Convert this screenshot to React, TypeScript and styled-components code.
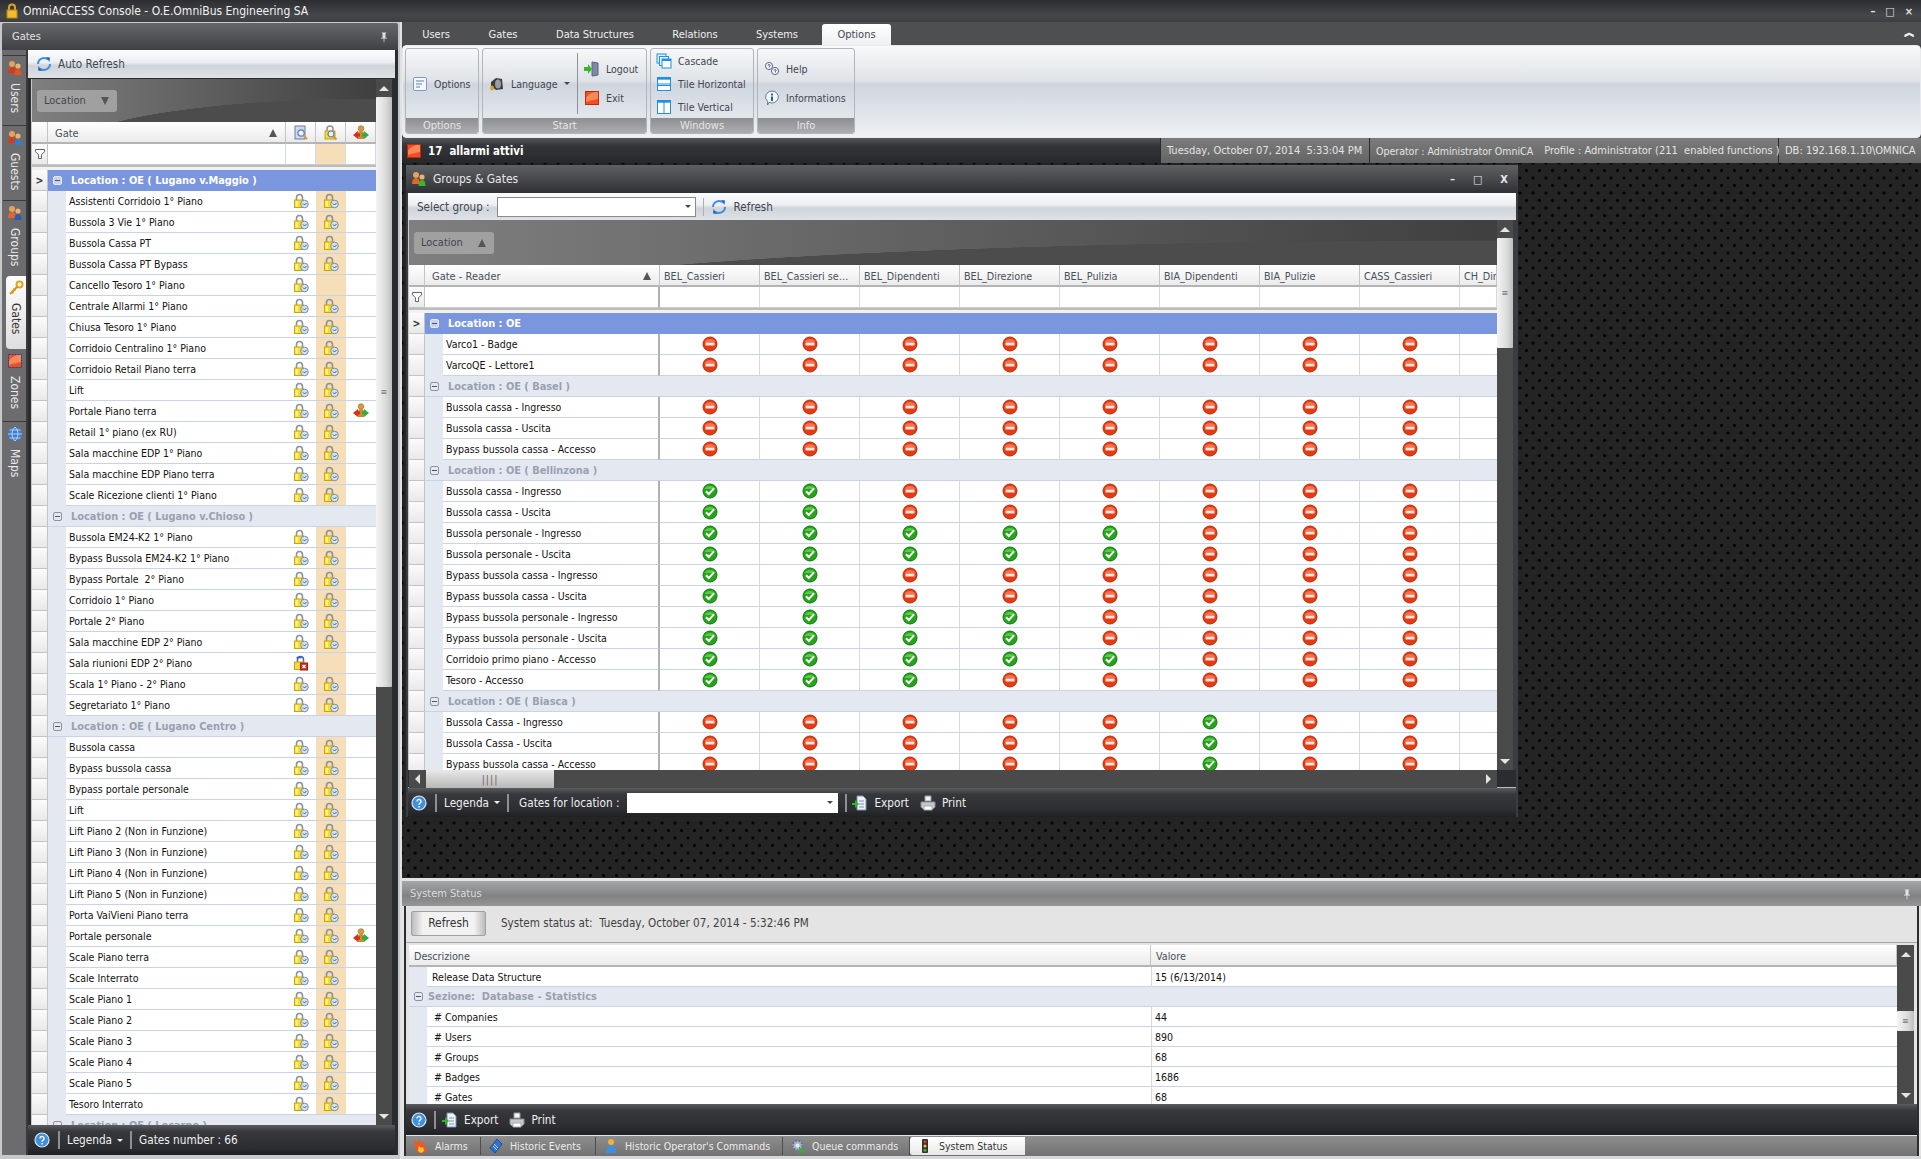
import React from 'react'
import styled, { createGlobalStyle } from 'styled-components'

const GlobalStyle = createGlobalStyle`
  html, body { margin: 0; padding: 0; background: #1c1c1c; }
  body {
    font-family: "DejaVu Sans", Tahoma, "Liberation Sans", sans-serif;
    font-stretch: condensed;
    font-size: 10.5px;
  }
  * { box-sizing: border-box; }
`

/* ---------- icons ---------- */

const IconSvg = styled.svg`
  flex: none;
  display: block;
`

const Svg = ({ size = 16, children }: { size?: number; children: React.ReactNode }) => (
  <IconSvg width={size} height={size} viewBox="0 0 16 16">
    {children}
  </IconSvg>
)

const LockClock = () => (
  <Svg>
    <path d="M3.5 8V4.5a3 3 0 0 1 6 0V8" fill="none" stroke="#8d9196" strokeWidth="1.6" />
    <rect x="1.5" y="7" width="9" height="7.5" fill="#f8dc28" stroke="#c9a510" strokeWidth="1" />
    <rect x="2.5" y="8" width="2.5" height="5.5" fill="#fff08a" />
    <circle cx="11.5" cy="11" r="3.8" fill="#cfe3f2" stroke="#7c8ea0" />
    <path d="M10 10.5l1.5 1.5 2-2" fill="none" stroke="#44607c" strokeWidth="1" />
  </Svg>
)

const LockDenied = () => (
  <Svg>
    <path d="M4.5 8V4.5a3 3 0 0 1 6 0V8" fill="none" stroke="#3f66b4" strokeWidth="1.5" />
    <rect x="3.5" y="1.8" width="5" height="1.6" fill="#3f66b4" />
    <rect x="1.5" y="7" width="9" height="7.5" fill="#f5dc3c" stroke="#c9a510" />
    <rect x="7.5" y="8" width="7" height="7" fill="#d6301c" stroke="#a01c0c" />
    <path d="M9.5 10l3 3m0-3l-3 3" stroke="#fff" strokeWidth="1.5" />
  </Svg>
)

const NoEntry = () => (
  <Svg>
    <circle cx="8" cy="8" r="7" fill="#e83a12" stroke="#bb2c08" />
    <path d="M2.5 6a6 5 0 0 1 11 0z" fill="#f7714c" />
    <rect x="3.5" y="6.5" width="9" height="3" fill="#fbe8e0" />
  </Svg>
)

const CheckOk = () => (
  <Svg>
    <circle cx="8" cy="8" r="7" fill="#27a51a" stroke="#0c7a10" />
    <path d="M2.5 6a6 5 0 0 1 11 0z" fill="#5cca47" />
    <path d="M4 8.2l2.8 2.8 5.2-5.6" fill="none" stroke="#fff" strokeWidth="2" />
  </Svg>
)

const RefreshArrows = () => (
  <Svg>
    <path d="M2 8a6 6 0 0 1 10-4.4" fill="none" stroke="#3f8fdc" strokeWidth="2" />
    <path d="M14 8a6 6 0 0 1-10 4.4" fill="none" stroke="#3f8fdc" strokeWidth="2" />
    <path d="M10 1l4 .5-.5 4.5zM6 15l-4-.5.5-4.5z" fill="#1d6cc0" />
  </Svg>
)

const HelpBall = () => (
  <Svg>
    <circle cx="8" cy="8" r="7" fill="#3f8fdc" stroke="#dfe8f2" strokeWidth="1.2" />
    <path d="M6 6.4a2 2 0 1 1 3 1.8c-.7.4-1 .8-1 1.6" fill="none" stroke="#fff" strokeWidth="1.4" />
    <rect x="7.3" y="11" width="1.5" height="1.5" fill="#fff" />
  </Svg>
)

const People = ({ front = '#e0561c', back = '#d63a1a' }: { front?: string; back?: string }) => (
  <Svg>
    <circle cx="5" cy="4" r="3" fill="#e4a25a" />
    <path d="M1 13c0-4 1.5-6 4-6s4 2 4 6z" fill={back} />
    <circle cx="11" cy="6" r="2.6" fill="#f0b268" />
    <path d="M7.5 15c0-4 1-6 3.5-6s3.5 2 3.5 6z" fill={front} />
  </Svg>
)

const Keys = () => (
  <Svg>
    <circle cx="11.5" cy="4.5" r="3" fill="none" stroke="#e0a51a" strokeWidth="2" />
    <path d="M9.5 6.5L2 14m1.5-3l2 2m0-4.5l2 2" stroke="#d9951a" strokeWidth="2" fill="none" />
  </Svg>
)

const RedSquare = ({ dashed }: { dashed?: boolean }) => (
  <Svg>
    <rect x="1.5" y="1.5" width="13" height="13" fill="#ef4f22" stroke={dashed ? '#1c3f9c' : '#bb2c0c'} strokeDasharray={dashed ? '2 1' : undefined} />
    <path d="M2 8c3-5 7-5 8-6h4v7c-3 1-7 1-12 3z" fill="#fa8858" />
  </Svg>
)

const Globe = () => (
  <Svg>
    <circle cx="8" cy="8" r="7" fill="#3f7ed0" />
    <path d="M1 8h14M8 1c-4 4-4 10 0 14M8 1c4 4 4 10 0 14M2.5 4h11M2.5 12h11" stroke="#cfe2f8" strokeWidth=".8" fill="none" />
  </Svg>
)

const Pin = ({ color = '#ddd' }: { color?: string }) => (
  <Svg size={12}>
    <path d="M5 2h6v1h-1v6h2v1H4V9h2V3H5zM7.5 10h1v5h-1z" fill={color} />
  </Svg>
)

const Funnel = () => (
  <Svg size={12}>
    <path d="M2 2h12v3L10 9v5H6V9L2 5z" fill="#fff" stroke="#555" strokeWidth="1.2" />
  </Svg>
)

const DocSearch = () => (
  <Svg>
    <rect x="2" y="1" width="10" height="13" fill="#cfd9ee" stroke="#6a7fa8" />
    <circle cx="8" cy="8" r="3.2" fill="#e8f3fb" stroke="#5e7ea8" strokeWidth="1.2" />
    <path d="M10.5 10.5l3.5 3.5" stroke="#d89a2c" strokeWidth="2" />
  </Svg>
)

const LockSearch = () => (
  <Svg>
    <path d="M4 7V4a3 3 0 0 1 6 0v3" fill="none" stroke="#8d9196" strokeWidth="1.5" />
    <rect x="2" y="6" width="10" height="8" fill="#f5dc3c" stroke="#c9a510" />
    <circle cx="8" cy="9" r="3" fill="#e8f3fb" stroke="#5e7ea8" strokeWidth="1.2" />
    <path d="M10.5 11.5l3 3" stroke="#d89a2c" strokeWidth="2" />
  </Svg>
)

const PersonArrows = () => (
  <Svg>
    <circle cx="8" cy="3.5" r="2.8" fill="#d99a3c" stroke="#9c6a1c" strokeWidth=".6" />
    <path d="M5 14V8c0-1 1-2 3-2s3 1 3 2v6z" fill="#c98a34" />
    <path d="M0 10l5-4v2.5h2v3H5V14z" fill="#d92c1c" />
    <path d="M16 10l-5-4v2.5H9v3h2V14z" fill="#2fae3c" />
  </Svg>
)

const OptionsDoc = () => (
  <Svg>
    <rect x="1.5" y="1.5" width="13" height="13" rx="1.5" fill="#f4f8fe" stroke="#7f9ac8" />
    <path d="M4 5h8M4 8h6M4 11h4" stroke="#5f7fb4" strokeWidth="1.2" />
  </Svg>
)

const Speaker = () => (
  <Svg>
    <path d="M2 6l5-4 6 1 1 10-7 1-5-4z" fill="#3a3c40" />
    <ellipse cx="9" cy="8" rx="3" ry="4.5" fill="#9a9ca2" />
    <ellipse cx="3" cy="12" rx="2" ry="2.5" fill="#d9a42a" />
  </Svg>
)

const DoorIn = () => (
  <Svg>
    <path d="M8 1l6 1v12l-6 1z" fill="#7f8aa8" stroke="#59627e" />
    <path d="M0 6h4V3l4 5-4 5v-3H0z" fill="#3cb52c" />
  </Svg>
)

const Windows = ({ kind }: { kind: 'cascade' | 'horizontal' | 'vertical' }) => (
  <Svg>
    {kind === 'cascade' && (
      <>
        <rect x="1" y="1" width="9" height="9" fill="#dff0ff" stroke="#1f8fe8" />
        <rect x="3.5" y="3.5" width="9" height="9" fill="#eef7ff" stroke="#1f8fe8" />
        <rect x="6" y="6" width="9" height="9" fill="#fff" stroke="#1f8fe8" />
        <rect x="6" y="6" width="9" height="2" fill="#1f8fe8" />
      </>
    )}
    {kind === 'horizontal' && (
      <>
        <rect x="1.5" y="1.5" width="13" height="13" fill="#fff" stroke="#1f8fe8" />
        <rect x="1.5" y="1.5" width="13" height="2.2" fill="#1f8fe8" />
        <path d="M1.5 8h13M1.5 9.5h13" stroke="#1f8fe8" />
      </>
    )}
    {kind === 'vertical' && (
      <>
        <rect x="1.5" y="1.5" width="13" height="13" fill="#fff" stroke="#1f8fe8" />
        <rect x="1.5" y="1.5" width="13" height="2.2" fill="#1f8fe8" />
        <path d="M8 3v11" stroke="#1f8fe8" />
      </>
    )}
  </Svg>
)

const Bubble = ({ mark }: { mark: 'help' | 'info' }) => (
  <Svg>
    {mark === 'help' ? (
      <>
        <circle cx="5" cy="5" r="3.6" fill="#f4f6fa" stroke="#5d6a86" />
        <circle cx="11" cy="10" r="3.6" fill="#f4f6fa" stroke="#5d6a86" />
        <path d="M4 4.5a1 1 0 1 1 1.3 1V6.5M10 9.5a1 1 0 1 1 1.3 1V11.5" stroke="#2b4fa4" fill="none" />
      </>
    ) : (
      <>
        <path d="M8 1a6.5 6 0 1 1-3 11.4L3.5 15l.2-3.6A6.5 6 0 0 1 8 1z" fill="#f4f7fb" stroke="#6a7688" />
        <rect x="7" y="3.5" width="2" height="2" fill="#1f5cc8" />
        <rect x="7" y="6.5" width="2" height="4.5" fill="#1f5cc8" />
      </>
    )}
  </Svg>
)

const ExportDoc = () => (
  <Svg>
    <path d="M5 1h6l3 3v11H5z" fill="#eef3fa" stroke="#7c90b4" />
    <path d="M7 6h5M7 9h5M7 12h5" stroke="#7c90b4" />
    <path d="M0 8h3V5l4 4-4 4v-3H0z" fill="#2fb52a" />
  </Svg>
)

const Printer = () => (
  <Svg>
    <path d="M5 1h6v5H5z" fill="#f4f4f4" stroke="#999" />
    <path d="M1 7h14v5l-2 2H3l-2-2z" fill="#c3c7cd" stroke="#8c9096" />
    <path d="M4 11h8v4H4z" fill="#fff" stroke="#aaa" />
  </Svg>
)

const Flame = () => (
  <Svg>
    <path d="M1 2l4 3 1-4 3 5 1-3 4 10-4 2H5L2 9z" fill="#ef5a1c" />
    <path d="M6 8l2 2 2-1 1 4-3 2-3-2z" fill="#fbc23c" />
  </Svg>
)

const BlueBook = () => (
  <Svg>
    <path d="M9 1l5 5-7 9-5-5z" fill="#2f73cc" stroke="#174e9c" />
    <path d="M6 6l4 4M5 8l4 4" stroke="#bcd8f8" />
  </Svg>
)

const Operator = () => (
  <Svg>
    <circle cx="8" cy="4" r="3" fill="#f0b23c" />
    <path d="M3 15c0-5 2-8 5-8s5 3 5 8z" fill="#3f8fdc" />
  </Svg>
)

const Gear = () => (
  <Svg>
    <circle cx="7.5" cy="7.5" r="5" fill="#aab4c8" stroke="#687690" strokeWidth="2.4" strokeDasharray="2 1.4" />
    <circle cx="7.5" cy="7.5" r="2" fill="#e8ecf2" />
    <path d="M9 9l6 3.5-6 3.5z" fill="#39ad3a" />
  </Svg>
)

const TrafficLight = () => (
  <Svg>
    <rect x="5" y="1" width="6" height="14" rx="1" fill="#333" />
    <circle cx="8" cy="3.8" r="1.5" fill="#e23a1c" />
    <circle cx="8" cy="8" r="1.5" fill="#f0c22c" />
    <circle cx="8" cy="12.2" r="1.5" fill="#3cb52c" />
  </Svg>
)

const SmallLock = () => (
  <Svg>
    <path d="M5 7V4.5a3 3 0 0 1 6 0V7" fill="none" stroke="#d9a42a" strokeWidth="2" />
    <rect x="3" y="7" width="10" height="8" fill="#f0bd2c" stroke="#b88512" />
  </Svg>
)

/* ---------- shell ---------- */

const Shell = styled.div`
  width: 1921px;
  height: 1159px;
  overflow: hidden;
  display: flex;
  flex-direction: column;
  background: #3a3c40;
`

const TitleBar = styled.div`
  height: 22px;
  flex: none;
  display: flex;
  align-items: center;
  gap: 3px;
  padding: 0 8px 0 4px;
  color: #f2f2f2;
  font-size: 12px;
  background: linear-gradient(#2b2d31, #45474b 70%, #3c3e42);
`

const TitleText = styled.div`
  flex: 1;
`

const WinButtons = styled.div<{ $gap: number }>`
  display: flex;
  align-items: center;
  gap: ${(p) => p.$gap}px;
  color: #e6e6e6;
  font-weight: bold;
  font-size: 11px;
`

const Body = styled.div`
  flex: 1;
  display: flex;
  min-height: 0;
`

const LeftDock = styled.div`
  width: 402px;
  flex: none;
  display: flex;
  flex-direction: column;
  padding: 1px 2px 4px 2px;
  background: #c6c8ca;
  border-right: 2px solid #dfe1e3;
`

const DockHeader = styled.div`
  height: 27px;
  flex: none;
  display: flex;
  align-items: center;
  justify-content: space-between;
  padding: 0 8px 0 10px;
  color: #e4e4e4;
  font-size: 11px;
  background: linear-gradient(#646668, #3f4145);
  border-radius: 2px 2px 0 0;
`

const DockBody = styled.div`
  flex: 1;
  display: flex;
  min-height: 0;
  background: #6a6a6a;
`

const VTabs = styled.div`
  width: 26px;
  flex: none;
  background: #6c6c6e;
  padding: 5px 0 0 1px;
  display: flex;
  flex-direction: column;
  border-right: 2px solid #3a3a3a;
`

const VTab = styled.div<{ $h: number; $active?: boolean; $noLine?: boolean }>`
  height: ${(p) => p.$h}px;
  flex: none;
  display: flex;
  flex-direction: column;
  align-items: center;
  gap: 7px;
  padding-top: 4px;
  color: ${(p) => (p.$active ? '#333' : '#eaeaea')};
  background: ${(p) => (p.$active ? 'linear-gradient(#fdfdfd, #dedede)' : 'transparent')};
  border-top: ${(p) => (p.$active || p.$noLine ? 'none' : '1px solid #3a3a3a')};
  border-radius: ${(p) => (p.$active ? '4px 0 0 4px' : '0')};
  margin-left: ${(p) => (p.$active ? '3px' : '0')};
`

const VLabel = styled.span`
  writing-mode: vertical-rl;
  white-space: nowrap;
  font-size: 12px;
  line-height: 14px;
`

const Pane = styled.div`
  flex: 1;
  min-width: 0;
  display: flex;
  flex-direction: column;
  background: #2a2c30;
  padding: 0 3px 0 0;
`

const GlossBar = styled.div<{ $h: number; $gap?: number; $pad?: number }>`
  height: ${(p) => p.$h}px;
  flex: none;
  display: flex;
  align-items: center;
  gap: ${(p) => p.$gap ?? 6}px;
  padding-left: ${(p) => p.$pad ?? 8}px;
  color: #3f4650;
  font-size: 11.6px;
  background: linear-gradient(#fbfcfd, #eceff2 44%, #cfd4da 56%, #dfe3e7);
`

const GridColumn = styled.div`
  flex: 1;
  min-height: 0;
  display: flex;
  flex-direction: column;
`

const GridFrame = styled.div<{ $margin: string }>`
  flex: 1;
  min-height: 0;
  display: flex;
  margin: ${(p) => p.$margin};
  background: #2a2c30;
  border-left: 1px solid #c9c9c9;
`

const GridMain = styled.div`
  flex: 1;
  min-width: 0;
  display: flex;
  flex-direction: column;
  background: #e4e8f1;
`

const GroupPanel = styled.div<{ $h: number }>`
  height: ${(p) => p.$h}px;
  flex: none;
  display: flex;
  align-items: center;
  padding: 0 0 0 5px;
  background: radial-gradient(ellipse 128% 170% at 100% 165%, #4c4c4c 0 70%, transparent 70.4%),
    linear-gradient(90deg, #7f7f7f, #525252 70%, #3f3f3f);
`

const GroupChip = styled.div`
  width: 80px;
  height: 22px;
  display: flex;
  align-items: center;
  justify-content: space-between;
  padding: 0 8px 0 7px;
  color: #3f4650;
  background: #a0a0a0;
  border-radius: 3px;
  font-size: 11px;
`

const Caret = styled.span<{ $up?: boolean }>`
  width: 0;
  height: 0;
  border-left: 4px solid transparent;
  border-right: 4px solid transparent;
  ${(p) => (p.$up ? 'border-bottom: 8px solid #555;' : 'border-top: 8px solid #555;')}
`

const GridRow = styled.div<{ $cols: string; $h?: number }>`
  display: grid;
  grid-template-columns: ${(p) => p.$cols};
  height: ${(p) => p.$h ?? 21}px;
  flex: none;
`

const HeaderCell = styled.div<{ $center?: boolean; $pad?: number }>`
  display: flex;
  align-items: center;
  justify-content: ${(p) => (p.$center ? 'center' : 'flex-start')};
  padding-left: ${(p) => (p.$center ? 0 : p.$pad ?? 4)}px;
  padding-top: 2px;
  overflow: hidden;
  white-space: nowrap;
  color: #47505c;
  font-size: 10.7px;
  background: linear-gradient(#fff, #ebebeb);
  border-right: 1px solid #c4c4c4;
  border-bottom: 2px solid #b4b4b4;
`

const NameHeader = styled(HeaderCell)`
  grid-column: span 2;
  justify-content: space-between;
  padding: 2px 8px 0 7px;
  font-size: 11px;
`

const SpanHeader = styled(HeaderCell)`
  grid-column: span 2;
`

const FilterCell = styled.div<{ $peach?: boolean; $strong?: boolean; $span?: number }>`
  grid-column: span ${(p) => p.$span ?? 1};
  background: ${(p) => (p.$peach ? '#f5deb8' : '#fff')};
  border-right: ${(p) => (p.$strong ? '2px solid #b0b0b0' : '1px solid #d3dbe8')};
  border-bottom: 1px solid #ccc;
`

const Spacer = styled.div`
  height: 5px;
  flex: none;
  background: #f2f2f2;
  border-top: 2px solid #bcbcbc;
`

const Selector = styled.div`
  display: flex;
  align-items: center;
  justify-content: center;
  background: linear-gradient(#fbfbfb, #e9e9e9);
  border-right: 1px solid #c4c4c4;
  border-bottom: 1px solid #c4c4c4;
  color: #333;
`

const IndentCell = styled.div`
  background: #e4e8f1;
`

const NameCell = styled.div<{ $strong?: boolean; $pad?: number }>`
  display: flex;
  align-items: center;
  padding-left: ${(p) => p.$pad ?? 3}px;
  background: #fff;
  color: #111;
  white-space: pre;
  overflow: hidden;
  border-bottom: 1px solid #c9d3e6;
  border-right: ${(p) => (p.$strong ? '2px solid #b0b0b0' : 'none')};
`

const DataCell = styled.div<{ $peach?: boolean; $line?: boolean }>`
  display: flex;
  align-items: center;
  justify-content: center;
  background: ${(p) => (p.$peach ? '#f5deb8' : '#fff')};
  border-bottom: 1px solid #c9d3e6;
  border-right: ${(p) => (p.$line ? '1px solid #d3dbe8' : 'none')};
`

const ValueCell = styled.div`
  display: flex;
  align-items: center;
  padding-left: 3px;
  background: #fff;
  color: #111;
  white-space: nowrap;
  border-left: 1px solid #d3dbe8;
  border-bottom: 1px solid #c9d3e6;
`

const GroupCell = styled.div<{ $active?: boolean }>`
  grid-column: 2 / -1;
  display: flex;
  align-items: center;
  gap: 9px;
  padding-left: 5px;
  font-weight: bold;
  font-size: 10.9px;
  white-space: pre;
  color: ${(p) => (p.$active ? '#fff' : '#98a1b0')};
  background: ${(p) => (p.$active ? '#7a96de' : '#e4e8f1')};
  border-bottom: 1px solid ${(p) => (p.$active ? '#7a96de' : '#c9d3e6')};
`

const SectionCell = styled(GroupCell)`
  grid-column: 1 / -1;
  gap: 5px;
`

const ExpandBox = styled.span<{ $active?: boolean }>`
  width: 9px;
  height: 9px;
  flex: none;
  position: relative;
  border: 1px solid ${(p) => (p.$active ? '#e4e8f1' : '#8a93a4')};
  border-radius: 2px;
  background: ${(p) => (p.$active ? '#c8d2ee' : 'transparent')};
  &::after {
    content: '';
    position: absolute;
    left: 1px;
    right: 1px;
    top: 3px;
    height: 1px;
    background: #555;
  }
`

const RowsArea = styled.div`
  flex: 1;
  min-height: 0;
  overflow: hidden;
`

const ScrollTrack = styled.div<{ $w?: number }>`
  width: ${(p) => p.$w ?? 16}px;
  flex: none;
  display: flex;
  flex-direction: column;
  background: #4a4a4a;
`

const ScrollBtn = styled.div`
  height: 18px;
  flex: none;
  display: flex;
  align-items: center;
  justify-content: center;
`

const Arrow = styled.span<{ $dir: 'up' | 'down' | 'left' | 'right' }>`
  width: 0;
  height: 0;
  ${(p) =>
    p.$dir === 'up'
      ? 'border-left:5px solid transparent;border-right:5px solid transparent;border-bottom:5px solid #e4e4e4;'
      : p.$dir === 'down'
      ? 'border-left:5px solid transparent;border-right:5px solid transparent;border-top:5px solid #e4e4e4;'
      : p.$dir === 'left'
      ? 'border-top:5px solid transparent;border-bottom:5px solid transparent;border-right:5px solid #e4e4e4;'
      : 'border-top:5px solid transparent;border-bottom:5px solid transparent;border-left:5px solid #e4e4e4;'}
`

const ScrollThumb = styled.div<{ $h: number; $mt?: number }>`
  height: ${(p) => p.$h}px;
  margin-top: ${(p) => p.$mt ?? 0}px;
  flex: none;
  display: flex;
  align-items: center;
  justify-content: center;
  background: linear-gradient(90deg, #f4f4f4, #dcdcdc 60%, #bebebe);
  border-radius: 1px;
  color: #777;
  font-size: 9px;
  line-height: 3px;
`

const ScrollFill = styled.div`
  flex: 1;
`

const DarkBar = styled.div<{ $h: number }>`
  height: ${(p) => p.$h}px;
  flex: none;
  display: flex;
  align-items: center;
  color: #f0f0f0;
  font-size: 11.7px;
  white-space: nowrap;
  background: linear-gradient(#5a5c60, #36383c 22%, #2b2d31 75%, #1e2024);
`

const BarSep = styled.span`
  width: 2px;
  height: 18px;
  background: #8e9094;
  flex: none;
`

const BarItem = styled.div<{ $gap?: number; $ml?: number; $mr?: number }>`
  display: flex;
  align-items: center;
  gap: ${(p) => p.$gap ?? 6}px;
  margin-left: ${(p) => p.$ml ?? 0}px;
  margin-right: ${(p) => p.$mr ?? 0}px;
`

const MiniCaret = styled.span`
  width: 0;
  height: 0;
  border-left: 3px solid transparent;
  border-right: 3px solid transparent;
  border-top: 3px solid currentColor;
`

/* ---------- right side ---------- */

const RightArea = styled.div`
  flex: 1;
  min-width: 0;
  display: flex;
  flex-direction: column;
`

const TabRow = styled.div`
  height: 23px;
  flex: none;
  display: flex;
  align-items: flex-end;
  background: #4e4f50;
  padding-left: 1px;
  color: #f0f0f0;
  font-size: 11px;
`

const RibbonTab = styled.div<{ $w: number; $active?: boolean }>`
  width: ${(p) => p.$w}px;
  height: 21px;
  display: flex;
  align-items: center;
  justify-content: center;
  margin-left: ${(p) => (p.$active ? 5 : 0)}px;
  color: ${(p) => (p.$active ? '#3f4650' : '#f0f0f0')};
  background: ${(p) => (p.$active ? 'linear-gradient(#fff, #eef0f2)' : 'transparent')};
  border-radius: 3px 3px 0 0;
`

const CollapseMark = styled.div`
  margin-left: auto;
  margin-right: 6px;
  margin-bottom: 7px;
  color: #f4f4f4;
  font-size: 11px;
  line-height: 10px;
  font-weight: bold;
`

const Ribbon = styled.div`
  height: 93px;
  flex: none;
  display: flex;
  gap: 3px;
  padding: 2px 2px 3px 2px;
  background: linear-gradient(#f8f9fa, #dfe3e7 38%, #cfd5dc 42%, #eef2f6);
  border: 1px solid #e8eaec;
  border-radius: 4px;
`

const RibbonGroup = styled.div<{ $w: number }>`
  width: ${(p) => p.$w}px;
  flex: none;
  display: flex;
  flex-direction: column;
  border: 1px solid #b0b5bb;
  border-radius: 3px;
  overflow: hidden;
`

const GroupContent = styled.div`
  flex: 1;
  display: flex;
  min-height: 0;
`

const GroupCaption = styled.div`
  height: 15px;
  flex: none;
  display: flex;
  align-items: center;
  justify-content: center;
  color: #e6e6e6;
  font-size: 11px;
  background: linear-gradient(#8c8e92, #acaeb0);
`

const RibbonStack = styled.div<{ $evenly?: boolean; $w?: number }>`
  flex: ${(p) => (p.$w ? `0 0 ${p.$w}px` : '1')};
  display: flex;
  flex-direction: column;
  justify-content: center;
  gap: ${(p) => (p.$evenly ? 7 : 13)}px;
  padding-left: ${(p) => (p.$evenly ? 5 : 6)}px;
`

const RibbonItem = styled.div`
  display: flex;
  align-items: center;
  gap: 6px;
  color: #3f4650;
  white-space: nowrap;
`

const RibbonDivider = styled.div`
  width: 1px;
  margin: 4px 0;
  background: #8d9298;
  flex: none;
`

const AlarmRow = styled.div`
  height: 25px;
  flex: none;
  display: flex;
  align-items: stretch;
`

const AlarmStrip = styled.div`
  width: 758px;
  flex: none;
  display: flex;
  align-items: center;
  gap: 6px;
  padding-left: 4px;
  color: #fff;
  font-weight: bold;
  font-size: 11.4px;
  white-space: pre;
  background: linear-gradient(#55575a, #33353a 30%, #26282c);
`

const StatusStrip = styled.div`
  flex: 1;
  display: flex;
  align-items: center;
  color: #e4e4e4;
  white-space: pre;
  font-size: 11px;
  background: linear-gradient(#7c7c7c, #646464);
  border-left: 1px solid #2a2a2a;
`

const StatusCell = styled.div<{ $w: number; $last?: boolean }>`
  width: ${(p) => p.$w}px;
  flex: none;
  height: 100%;
  display: flex;
  align-items: center;
  padding-left: 6px;
  gap: 11px;
  border-right: ${(p) => (p.$last ? 'none' : '1px solid #2a2a2a')};
`

const OperatorName = styled.span`
  font-size: 10.5px;
`

const Workspace = styled.div`
  flex: 1;
  min-height: 0;
  padding: 2px 0 0 4px;
  background-color: #242424;
  background-image: radial-gradient(circle at center, #000 1.2px, transparent 1.7px),
    radial-gradient(circle at center, #000 1.2px, transparent 1.7px);
  background-size: 13px 15px;
  background-position: 0 0, 6.5px 7.5px;
`

const MdiWindow = styled.div`
  width: 1112px;
  height: 652px;
  display: flex;
  flex-direction: column;
  background: #3a3c40;
  padding: 0 2px;
`

const MdiTitle = styled.div`
  height: 28px;
  flex: none;
  display: flex;
  align-items: center;
  gap: 6px;
  padding: 0 10px 0 5px;
  color: #e8e8e8;
  font-size: 12px;
  margin: 0 -2px;
  background: linear-gradient(#5e6064, #2f3135);
`

const MdiTitleText = styled.div`
  flex: 1;
`

const Combo = styled.div<{ $w: number; $dark?: boolean }>`
  width: ${(p) => p.$w}px;
  height: 20px;
  flex: none;
  display: flex;
  align-items: center;
  justify-content: flex-end;
  padding-right: 4px;
  color: #444;
  background: #fff;
  border: 1px solid ${(p) => (p.$dark ? '#fff' : '#8a8a8a')};
`

const ToolSep = styled.span`
  width: 1px;
  height: 18px;
  background: #aab0b6;
  flex: none;
`

const HScroll = styled.div`
  height: 18px;
  flex: none;
  display: flex;
  align-items: center;
  background: #4a4a4a;
  margin-right: 19px;
  margin-left: 1px;
`

const HCorner = styled.div`
  height: 18px;
  flex: none;
  display: flex;
  background: #2a2c30;
  border-bottom: 1px solid #bbb;
`

const HBtn = styled.div`
  width: 17px;
  height: 100%;
  flex: none;
  display: flex;
  align-items: center;
  justify-content: center;
`

const HThumb = styled.div`
  width: 128px;
  height: 100%;
  flex: none;
  display: flex;
  align-items: center;
  justify-content: center;
  color: #666;
  letter-spacing: 1px;
  background: linear-gradient(#e8e8e8, #b8b8b8);
`

const HFill = styled.div`
  flex: 1;
`

const StatusPanel = styled.div`
  height: 281px;
  flex: none;
  display: flex;
  flex-direction: column;
  border-top: 3px solid #e2e4e6;
  background: #e4e4e4;
`

const StatusTitle = styled.div`
  height: 25px;
  flex: none;
  display: flex;
  align-items: center;
  justify-content: space-between;
  padding: 0 8px 0 8px;
  color: #dcdcdc;
  font-size: 11px;
  background: linear-gradient(#a4a6a8, #808284 60%, #949698);
`

const StatusBody = styled.div`
  flex: 1;
  min-height: 0;
  display: flex;
  flex-direction: column;
  margin: 0 2px 0 2px;
  border-left: 2px solid #2b2d31;
  border-right: 2px solid #2b2d31;
  background: #e4e4e4;
`

const StatusTools = styled.div`
  height: 37px;
  flex: none;
  display: flex;
  align-items: center;
  gap: 15px;
  padding: 0 0 2px 5px;
  color: #404040;
  font-size: 11.6px;
  white-space: pre;
  border-bottom: 1px solid #a6a6a6;
`

const PlainButton = styled.div`
  width: 75px;
  height: 25px;
  display: flex;
  align-items: center;
  justify-content: center;
  color: #333;
  border: 1px solid #a0a0a0;
  border-radius: 2px;
  font-size: 12px;
  background: linear-gradient(90deg, #bcbcbc, #f2f2f2 15%, #f2f2f2 85%, #bcbcbc);
`

const StatusGridFrame = styled.div`
  height: 159px;
  flex: none;
  display: flex;
  margin: 2px 3px 0 3px;
`

const BottomTabs = styled.div`
  height: 21px;
  flex: none;
  display: flex;
  align-items: stretch;
  margin-top: 1px;
  color: #ededed;
  white-space: nowrap;
  background: linear-gradient(#8e8e8e, #707070);
`

const BottomTab = styled.div<{ $w: number; $active?: boolean }>`
  width: ${(p) => p.$w}px;
  flex: none;
  display: flex;
  align-items: center;
  gap: 6px;
  padding-left: 7px;
  color: ${(p) => (p.$active ? '#333' : '#ededed')};
  background: ${(p) => (p.$active ? 'linear-gradient(#fff, #e8e8e8)' : 'transparent')};
  border-right: ${(p) => (p.$active ? 'none' : '1px solid #4e4e4e')};
  border-radius: ${(p) => (p.$active ? '3px 0 0 3px' : '0')};
  margin: 1px 0 2px;
`

const BottomEdge = styled.div`
  height: 3px;
  flex: none;
  background: #d6d8da;
`

/* ---------- data ---------- */

type Access = 0 | 1 | 2
type Gate = [string, Access?, Access?, Access?]

const leftGroups: { title: string; active?: boolean; rows: Gate[] }[] = [
  {
    title: 'Location : OE ( Lugano v.Maggio )',
    active: true,
    rows: [
      ['Assistenti Corridoio 1° Piano'],
      ['Bussola 3 Vie 1° Piano'],
      ['Bussola Cassa PT'],
      ['Bussola Cassa PT Bypass'],
      ['Cancello Tesoro 1° Piano', 1, 0],
      ['Centrale Allarmi 1° Piano'],
      ['Chiusa Tesoro 1° Piano'],
      ['Corridoio Centralino 1° Piano'],
      ['Corridoio Retail Piano terra'],
      ['Lift'],
      ['Portale Piano terra', 1, 1, 1],
      ['Retail 1° piano (ex RU)'],
      ['Sala macchine EDP 1° Piano'],
      ['Sala macchine EDP Piano terra'],
      ['Scale Ricezione clienti 1° Piano'],
    ],
  },
  {
    title: 'Location : OE ( Lugano v.Chioso )',
    rows: [
      ['Bussola EM24-K2 1° Piano'],
      ['Bypass Bussola EM24-K2 1° Piano'],
      ['Bypass Portale  2° Piano'],
      ['Corridoio 1° Piano'],
      ['Portale 2° Piano'],
      ['Sala macchine EDP 2° Piano'],
      ['Sala riunioni EDP 2° Piano', 2, 0],
      ['Scala 1° Piano - 2° Piano'],
      ['Segretariato 1° Piano'],
    ],
  },
  {
    title: 'Location : OE ( Lugano Centro )',
    rows: [
      ['Bussola cassa'],
      ['Bypass bussola cassa'],
      ['Bypass portale personale'],
      ['Lift'],
      ['Lift Piano 2 (Non in Funzione)'],
      ['Lift Piano 3 (Non in Funzione)'],
      ['Lift Piano 4 (Non in Funzione)'],
      ['Lift Piano 5 (Non in Funzione)'],
      ['Porta VaiVieni Piano terra'],
      ['Portale personale', 1, 1, 1],
      ['Scale Piano terra'],
      ['Scale Interrato'],
      ['Scale Piano 1'],
      ['Scale Piano 2'],
      ['Scale Piano 3'],
      ['Scale Piano 4'],
      ['Scale Piano 5'],
      ['Tesoro Interrato'],
    ],
  },
  { title: 'Location : OE ( Locarno )', rows: [] },
]

const permissionColumns = ['BEL_Cassieri', 'BEL_Cassieri se…', 'BEL_Dipendenti', 'BEL_Direzione', 'BEL_Pulizia', 'BIA_Dipendenti', 'BIA_Pulizie', 'CASS_Cassieri', 'CH_Dir']

const permissionGroups: { title: string; active?: boolean; rows: [string, string][] }[] = [
  {
    title: 'Location : OE',
    active: true,
    rows: [
      ['Varco1 - Badge', 'RRRRRRRR'],
      ['VarcoQE - Lettore1', 'RRRRRRRR'],
    ],
  },
  {
    title: 'Location : OE ( Basel )',
    rows: [
      ['Bussola cassa - Ingresso', 'RRRRRRRR'],
      ['Bussola cassa - Uscita', 'RRRRRRRR'],
      ['Bypass bussola cassa - Accesso', 'RRRRRRRR'],
    ],
  },
  {
    title: 'Location : OE ( Bellinzona )',
    rows: [
      ['Bussola cassa - Ingresso', 'GGRRRRRR'],
      ['Bussola cassa - Uscita', 'GGRRRRRR'],
      ['Bussola personale - Ingresso', 'GGGGGRRR'],
      ['Bussola personale - Uscita', 'GGGGGRRR'],
      ['Bypass bussola cassa - Ingresso', 'GGRRRRRR'],
      ['Bypass bussola cassa - Uscita', 'GGRRRRRR'],
      ['Bypass bussola personale - Ingresso', 'GGGGRRRR'],
      ['Bypass bussola personale - Uscita', 'GGGGRRRR'],
      ['Corridoio primo piano - Accesso', 'GGGGGRRR'],
      ['Tesoro - Accesso', 'GGGRRRRR'],
    ],
  },
  {
    title: 'Location : OE ( Biasca )',
    rows: [
      ['Bussola Cassa - Ingresso', 'RRRRRGRR'],
      ['Bussola Cassa - Uscita', 'RRRRRGRR'],
      ['Bypass bussola cassa - Accesso', 'RRRRRGRR'],
    ],
  },
]

const statusRows = [
  ['# Companies', '44'],
  ['# Users', '890'],
  ['# Groups', '68'],
  ['# Badges', '1686'],
  ['# Gates', '68'],
]

const LEFT_COLS = '16px 18px 220px 30px 30px 30px'
const PERM_COLS = '16px 18px 217px repeat(8, 100px) 1fr'
const STATUS_COLS = '18px 724px 1fr'

const accessIcon = (value: Access | undefined) => {
  if (value === 0) return null
  return value === 2 ? <LockDenied /> : <LockClock />
}

function LeftGrid() {
  return (
    <GridFrame $margin="1px 3px 0 3px">
      <GridMain>
        <GroupPanel $h={43}>
          <GroupChip>
            Location <Caret />
          </GroupChip>
        </GroupPanel>
        <GridRow $cols={LEFT_COLS} $h={22}>
          <HeaderCell />
          <NameHeader>
            Gate <Caret $up />
          </NameHeader>
          <HeaderCell $center>
            <DocSearch />
          </HeaderCell>
          <HeaderCell $center>
            <LockSearch />
          </HeaderCell>
          <HeaderCell $center>
            <PersonArrows />
          </HeaderCell>
        </GridRow>
        <GridRow $cols={LEFT_COLS}>
          <Selector>
            <Funnel />
          </Selector>
          <FilterCell $span={2} />
          <FilterCell />
          <FilterCell $peach />
          <FilterCell />
        </GridRow>
        <Spacer />
        <RowsArea>
          {leftGroups.map((group) => (
            <React.Fragment key={group.title}>
              <GridRow $cols={LEFT_COLS}>
                <Selector>{group.active ? <b>&gt;</b> : null}</Selector>
                <GroupCell $active={group.active}>
                  <ExpandBox $active={group.active} />
                  {group.title}
                </GroupCell>
              </GridRow>
              {group.rows.map(([name, first = 1, second = 1, third = 0], i) => (
                <GridRow $cols={LEFT_COLS} key={name + i}>
                  <Selector />
                  <IndentCell />
                  <NameCell>{name}</NameCell>
                  <DataCell>{accessIcon(first)}</DataCell>
                  <DataCell $peach>{accessIcon(second)}</DataCell>
                  <DataCell>{third ? <PersonArrows /> : null}</DataCell>
                </GridRow>
              ))}
            </React.Fragment>
          ))}
        </RowsArea>
      </GridMain>
      <ScrollTrack>
        <ScrollBtn>
          <Arrow $dir="up" />
        </ScrollBtn>
        <ScrollThumb $h={590}>≡</ScrollThumb>
        <ScrollFill />
        <ScrollBtn>
          <Arrow $dir="down" />
        </ScrollBtn>
      </ScrollTrack>
    </GridFrame>
  )
}

function PermissionGrid() {
  return (
    <GridColumn>
      <GridFrame $margin="0 3px 0 0">
        <GridMain>
          <GroupPanel $h={45}>
            <GroupChip>
              Location <Caret $up />
            </GroupChip>
          </GroupPanel>
          <GridRow $cols={PERM_COLS} $h={22}>
            <HeaderCell />
            <NameHeader>
              Gate - Reader <Caret $up />
            </NameHeader>
            {permissionColumns.map((c) => (
              <HeaderCell key={c}>{c}</HeaderCell>
            ))}
          </GridRow>
          <GridRow $cols={PERM_COLS}>
            <Selector>
              <Funnel />
            </Selector>
            <FilterCell $strong $span={2} />
            {permissionColumns.map((c) => (
              <FilterCell key={c} />
            ))}
          </GridRow>
          <Spacer />
          <RowsArea>
            {permissionGroups.map((group) => (
              <React.Fragment key={group.title}>
                <GridRow $cols={PERM_COLS}>
                  <Selector>{group.active ? <b>&gt;</b> : null}</Selector>
                  <GroupCell $active={group.active}>
                    <ExpandBox $active={group.active} />
                    {group.title}
                  </GroupCell>
                </GridRow>
                {group.rows.map(([name, flags]) => (
                  <GridRow $cols={PERM_COLS} key={name}>
                    <Selector />
                    <IndentCell />
                    <NameCell $strong>{name}</NameCell>
                    {flags.split('').map((flag, i) => (
                      <DataCell $line key={i}>
                        {flag === 'G' ? <CheckOk /> : <NoEntry />}
                      </DataCell>
                    ))}
                    <DataCell />
                  </GridRow>
                ))}
              </React.Fragment>
            ))}
          </RowsArea>
        </GridMain>
        <ScrollTrack>
          <ScrollBtn>
            <Arrow $dir="up" />
          </ScrollBtn>
          <ScrollThumb $h={110}>≡</ScrollThumb>
          <ScrollFill />
          <ScrollBtn>
            <Arrow $dir="down" />
          </ScrollBtn>
        </ScrollTrack>
      </GridFrame>
      <HCorner>
        <HFill>
          <HScroll>
            <HBtn>
              <Arrow $dir="left" />
            </HBtn>
            <HThumb>||||</HThumb>
            <HFill />
            <HBtn>
              <Arrow $dir="right" />
            </HBtn>
          </HScroll>
        </HFill>
      </HCorner>
    </GridColumn>
  )
}

function StatusGrid() {
  return (
    <StatusGridFrame>
      <GridMain>
        <GridRow $cols={STATUS_COLS} $h={22}>
          <SpanHeader $pad={5}>Descrizione</SpanHeader>
          <HeaderCell $pad={5}>Valore</HeaderCell>
        </GridRow>
        <RowsArea>
          <GridRow $cols={STATUS_COLS} $h={20}>
            <IndentCell />
            <NameCell $pad={5}>Release Data Structure</NameCell>
            <ValueCell>15 (6/13/2014)</ValueCell>
          </GridRow>
          <GridRow $cols={STATUS_COLS} $h={20}>
            <SectionCell>
              <ExpandBox />
              Sezione:  Database - Statistics
            </SectionCell>
          </GridRow>
          {statusRows.map(([name, value]) => (
            <GridRow $cols={STATUS_COLS} $h={20} key={name}>
              <IndentCell />
              <NameCell $pad={7}>{name}</NameCell>
              <ValueCell>{value}</ValueCell>
            </GridRow>
          ))}
        </RowsArea>
      </GridMain>
      <ScrollTrack $w={17}>
        <ScrollBtn>
          <Arrow $dir="up" />
        </ScrollBtn>
        <ScrollThumb $h={20} $mt={48}>
          ≡
        </ScrollThumb>
        <ScrollFill />
        <ScrollBtn>
          <Arrow $dir="down" />
        </ScrollBtn>
      </ScrollTrack>
    </StatusGridFrame>
  )
}

function RibbonBar() {
  return (
    <Ribbon>
      <RibbonGroup $w={74}>
        <GroupContent>
          <RibbonStack>
            <RibbonItem>
              <OptionsDoc />
              Options
            </RibbonItem>
          </RibbonStack>
        </GroupContent>
        <GroupCaption>Options</GroupCaption>
      </RibbonGroup>
      <RibbonGroup $w={165}>
        <GroupContent>
          <RibbonStack $w={94}>
            <RibbonItem>
              <Speaker />
              Language
              <MiniCaret />
            </RibbonItem>
          </RibbonStack>
          <RibbonDivider />
          <RibbonStack>
            <RibbonItem>
              <DoorIn />
              Logout
            </RibbonItem>
            <RibbonItem>
              <RedSquare />
              Exit
            </RibbonItem>
          </RibbonStack>
        </GroupContent>
        <GroupCaption>Start</GroupCaption>
      </RibbonGroup>
      <RibbonGroup $w={104}>
        <GroupContent>
          <RibbonStack $evenly>
            <RibbonItem>
              <Windows kind="cascade" />
              Cascade
            </RibbonItem>
            <RibbonItem>
              <Windows kind="horizontal" />
              Tile Horizontal
            </RibbonItem>
            <RibbonItem>
              <Windows kind="vertical" />
              Tile Vertical
            </RibbonItem>
          </RibbonStack>
        </GroupContent>
        <GroupCaption>Windows</GroupCaption>
      </RibbonGroup>
      <RibbonGroup $w={98}>
        <GroupContent>
          <RibbonStack>
            <RibbonItem>
              <Bubble mark="help" />
              Help
            </RibbonItem>
            <RibbonItem>
              <Bubble mark="info" />
              Informations
            </RibbonItem>
          </RibbonStack>
        </GroupContent>
        <GroupCaption>Info</GroupCaption>
      </RibbonGroup>
    </Ribbon>
  )
}

export default function App() {
  return (
    <Shell>
      <GlobalStyle />
      <TitleBar>
        <SmallLock />
        <TitleText>OmniACCESS Console - O.E.OmniBus Engineering SA</TitleText>
        <WinButtons $gap={10}>
          <span>–</span>
          <span>□</span>
          <span>×</span>
        </WinButtons>
      </TitleBar>
      <Body>
        <LeftDock>
          <DockHeader>
            Gates
            <Pin />
          </DockHeader>
          <DockBody>
            <VTabs>
              <VTab $h={70}>
                <People />
                <VLabel>Users</VLabel>
              </VTab>
              <VTab $h={75}>
                <People front="#2f7fd0" />
                <VLabel>Guests</VLabel>
              </VTab>
              <VTab $h={76}>
                <People front="#3158b4" back="#e0682a" />
                <VLabel>Groups</VLabel>
              </VTab>
              <VTab $h={73} $active>
                <Keys />
                <VLabel>Gates</VLabel>
              </VTab>
              <VTab $h={72} $noLine>
                <RedSquare dashed />
                <VLabel>Zones</VLabel>
              </VTab>
              <VTab $h={72}>
                <Globe />
                <VLabel>Maps</VLabel>
              </VTab>
            </VTabs>
            <Pane>
              <GlossBar $h={28}>
                <RefreshArrows />
                Auto Refresh
              </GlossBar>
              <LeftGrid />
              <DarkBar $h={30}>
                <BarItem $ml={6} $mr={8}>
                  <HelpBall />
                </BarItem>
                <BarSep />
                <BarItem $ml={7} $mr={7} $gap={5}>
                  Legenda <MiniCaret />
                </BarItem>
                <BarSep />
                <BarItem $ml={7}>Gates number : 66</BarItem>
              </DarkBar>
            </Pane>
          </DockBody>
        </LeftDock>
        <RightArea>
          <TabRow>
            <RibbonTab $w={66}>Users</RibbonTab>
            <RibbonTab $w={68}>Gates</RibbonTab>
            <RibbonTab $w={116}>Data Structures</RibbonTab>
            <RibbonTab $w={84}>Relations</RibbonTab>
            <RibbonTab $w={80}>Systems</RibbonTab>
            <RibbonTab $w={69} $active>
              Options
            </RibbonTab>
            <CollapseMark>︽</CollapseMark>
          </TabRow>
          <RibbonBar />
          <AlarmRow>
            <AlarmStrip>
              <RedSquare />
              17  allarmi attivi
            </AlarmStrip>
            <StatusStrip>
              <StatusCell $w={209}>Tuesday, October 07, 2014  5:33:04 PM</StatusCell>
              <StatusCell $w={409}>
                <OperatorName>Operator : Administrator OmniCA</OperatorName>
                <span>Profile : Administrator (211  enabled functions )</span>
              </StatusCell>
              <StatusCell $w={142} $last>
                DB: 192.168.1.10\OMNICA
              </StatusCell>
            </StatusStrip>
          </AlarmRow>
          <Workspace>
            <MdiWindow>
              <MdiTitle>
                <People front="#3cb52c" back="#e0682a" />
                <MdiTitleText>Groups &amp; Gates</MdiTitleText>
                <WinButtons $gap={18}>
                  <span>–</span>
                  <span>□</span>
                  <span>X</span>
                </WinButtons>
              </MdiTitle>
              <GlossBar $h={27} $gap={7} $pad={9}>
                Select group :
                <Combo $w={199}>
                  <MiniCaret />
                </Combo>
                <ToolSep />
                <RefreshArrows />
                Refresh
              </GlossBar>
              <PermissionGrid />
              <DarkBar $h={29}>
                <BarItem $ml={3} $mr={8}>
                  <HelpBall />
                </BarItem>
                <BarSep />
                <BarItem $ml={7} $mr={7} $gap={5}>
                  Legenda <MiniCaret />
                </BarItem>
                <BarSep />
                <BarItem $ml={10} $mr={8}>
                  Gates for location :
                </BarItem>
                <Combo $w={211} $dark>
                  <MiniCaret />
                </Combo>
                <BarItem $ml={7} $mr={5}>
                  <BarSep />
                </BarItem>
                <BarItem $mr={11}>
                  <ExportDoc />
                  Export
                </BarItem>
                <BarItem>
                  <Printer />
                  Print
                </BarItem>
              </DarkBar>
            </MdiWindow>
          </Workspace>
          <StatusPanel>
            <StatusTitle>
              System Status
              <Pin color="#e6e6e6" />
            </StatusTitle>
            <StatusBody>
              <StatusTools>
                <PlainButton>Refresh</PlainButton>
                System status at:  Tuesday, October 07, 2014 - 5:32:46 PM
              </StatusTools>
              <StatusGrid />
              <DarkBar $h={31}>
                <BarItem $ml={5} $mr={7}>
                  <HelpBall />
                </BarItem>
                <BarSep />
                <BarItem $ml={6} $mr={11}>
                  <ExportDoc />
                  Export
                </BarItem>
                <BarItem>
                  <Printer />
                  Print
                </BarItem>
              </DarkBar>
              <BottomTabs>
                <BottomTab $w={75}>
                  <Flame />
                  Alarms
                </BottomTab>
                <BottomTab $w={115}>
                  <BlueBook />
                  Historic Events
                </BottomTab>
                <BottomTab $w={187}>
                  <Operator />
                  Historic Operator's Commands
                </BottomTab>
                <BottomTab $w={127}>
                  <Gear />
                  Queue commands
                </BottomTab>
                <BottomTab $w={115} $active>
                  <TrafficLight />
                  System Status
                </BottomTab>
              </BottomTabs>
            </StatusBody>
            <BottomEdge />
          </StatusPanel>
        </RightArea>
      </Body>
    </Shell>
  )
}
